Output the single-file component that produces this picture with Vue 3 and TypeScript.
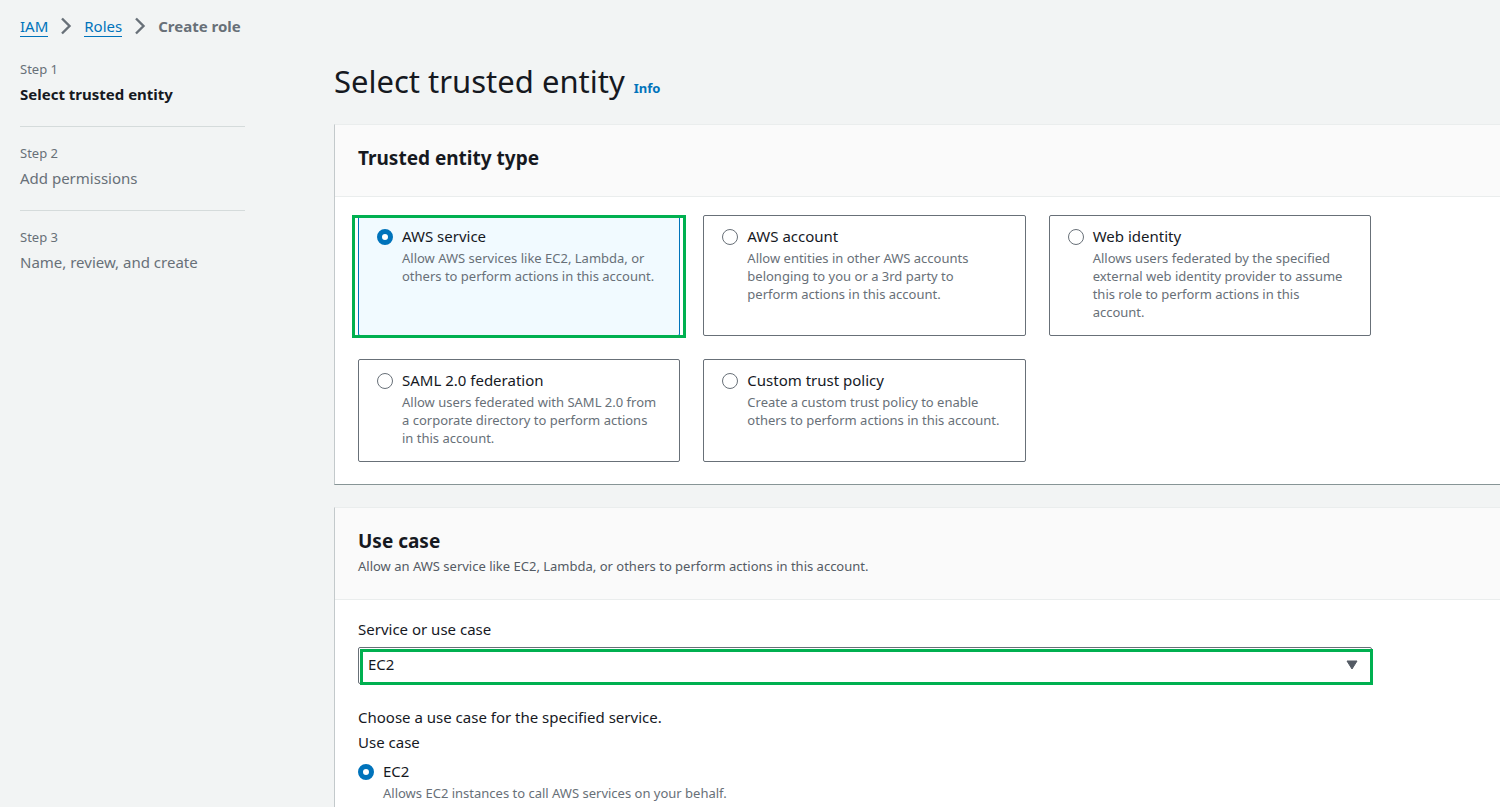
<script setup lang="ts">
import { ref } from 'vue'

interface Step {
  label: string
  title: string
}

interface EntityType {
  id: string
  title: string
  description: string
}

const steps: Step[] = [
  { label: 'Step 1', title: 'Select trusted entity' },
  { label: 'Step 2', title: 'Add permissions' },
  { label: 'Step 3', title: 'Name, review, and create' },
]
const currentStep = 0

const entityTypes: EntityType[] = [
  {
    id: 'service',
    title: 'AWS service',
    description: 'Allow AWS services like EC2, Lambda, or\nothers to perform actions in this account.',
  },
  {
    id: 'account',
    title: 'AWS account',
    description: 'Allow entities in other AWS accounts\nbelonging to you or a 3rd party to\nperform actions in this account.',
  },
  {
    id: 'web',
    title: 'Web identity',
    description:
      'Allows users federated by the specified\nexternal web identity provider to assume\nthis role to perform actions in this\naccount.',
  },
  {
    id: 'saml',
    title: 'SAML 2.0 federation',
    description: 'Allow users federated with SAML 2.0 from\na corporate directory to perform actions\nin this account.',
  },
  {
    id: 'custom',
    title: 'Custom trust policy',
    description: 'Create a custom trust policy to enable\nothers to perform actions in this account.',
  },
]

const entity = ref('service')
const service = ref('EC2')
const useCase = ref('ec2')
</script>

<template>
  <div class="page">
    <nav class="crumbs" aria-label="Breadcrumbs">
      <a href="#iam">IAM</a>
      <svg class="chevron" viewBox="0 0 12 18" aria-hidden="true"><path d="M2 1.5 9.5 9 2 16.5" /></svg>
      <a href="#roles">Roles</a>
      <svg class="chevron" viewBox="0 0 12 18" aria-hidden="true"><path d="M2 1.5 9.5 9 2 16.5" /></svg>
      <span class="here">Create role</span>
    </nav>

    <div class="columns">
      <ol class="steps">
        <li v-for="(step, i) in steps" :key="step.label" class="step" :class="{ current: i === currentStep }">
          <span class="step-label">{{ step.label }}</span>
          <span class="step-title">{{ step.title }}</span>
        </li>
      </ol>

      <main class="main">
        <div class="heading">
          <h1>Select trusted entity</h1>
          <a class="info" href="#info">Info</a>
        </div>

        <section class="panel">
          <header class="panel-head">
            <h2>Trusted entity type</h2>
          </header>
          <div class="tiles">
            <label v-for="t in entityTypes" :key="t.id" class="tile" :class="{ selected: entity === t.id }">
              <input v-model="entity" class="radio" type="radio" name="entity" :value="t.id" />
              <span class="option">
                <span class="option-title">{{ t.title }}</span>
                <span class="option-text">{{ t.description }}</span>
              </span>
            </label>
          </div>
        </section>

        <section class="panel last">
          <header class="panel-head">
            <h2>Use case</h2>
            <p class="sub">Allow an AWS service like EC2, Lambda, or others to perform actions in this account.</p>
          </header>
          <div class="form">
            <label class="field-label" for="service">Service or use case</label>
            <div class="select-wrap">
              <select id="service" v-model="service">
                <option>EC2</option>
                <option>Lambda</option>
              </select>
              <svg class="caret" viewBox="0 0 12 10" aria-hidden="true"><path d="M1 1h10L6 9z" /></svg>
            </div>
            <p class="choose">Choose a use case for the specified service.</p>
            <p class="case-label">Use case</p>
            <label class="case">
              <input v-model="useCase" class="radio" type="radio" name="usecase" value="ec2" />
              <span class="option">
                <span class="option-title">EC2</span>
                <span class="option-text">Allows EC2 instances to call AWS services on your behalf.</span>
              </span>
            </label>
          </div>
        </section>
      </main>
    </div>
  </div>
</template>

<style>
body {
  margin: 0;
  background: #f2f4f4;
}
</style>

<style scoped>
* {
  box-sizing: border-box;
}
.page {
  display: flex;
  flex-direction: column;
  min-height: 100vh;
  padding: 15px 0 0 20px;
  background: #f2f4f4;
  color: #16191f;
  font-family: 'Noto Sans', 'Open Sans', sans-serif;
  font-size: 15px;
  line-height: 22px;
}
h1,
h2,
p,
ol {
  margin: 0;
  padding: 0;
}
.crumbs {
  display: flex;
  align-items: center;
  height: 22px;
}
.crumbs a {
  height: 21px;
  border-bottom: 1px solid #0073bb;
  color: #0073bb;
  line-height: 20px;
  text-decoration: none;
}
.chevron {
  width: 12px;
  height: 18px;
  margin: 0 12px;
  fill: none;
  stroke: #687078;
  stroke-width: 2.4;
}
.here {
  color: #687078;
  font-weight: 700;
  line-height: 20px;
}
.columns {
  display: flex;
  flex: 1;
  gap: 89px;
}
.steps {
  flex: 0 0 225px;
  padding-top: 6px;
  list-style: none;
}
.step {
  display: flex;
  flex-direction: column;
  gap: 5px;
  padding: 17px 0 21px;
  border-bottom: 1px solid #d5dbdb;
  color: #687078;
}
.step:last-child {
  border-bottom: 0;
}
.step-label {
  font-size: 13px;
  line-height: 18px;
}
.current .step-title {
  color: #16191f;
  font-weight: 700;
}
.main {
  display: flex;
  flex: 1;
  flex-direction: column;
  min-width: 0;
}
.heading {
  display: flex;
  align-items: baseline;
  gap: 9px;
  height: 87px;
  padding-top: 24px;
}
h1 {
  font-size: 31px;
  font-weight: 400;
  line-height: 40px;
}
.info {
  color: #0073bb;
  font-size: 13px;
  font-weight: 700;
  text-decoration: none;
}
.panel {
  margin-bottom: 22px;
  border-top: 1px solid #eaeded;
  border-left: 1px solid #c3c9cb;
  border-bottom: 1px solid #879596;
  background: #fff;
}
.panel.last {
  flex: 1;
  margin-bottom: 0;
  border-bottom: 0;
}
.panel-head {
  padding: 20px 23px 25px;
  border-bottom: 1px solid #eaeded;
  background: #fafafa;
}
h2 {
  font-size: 19px;
  font-weight: 700;
  line-height: 26px;
}
.sub {
  margin-top: 4px;
  color: #545b64;
  font-size: 13px;
  line-height: 16px;
}
.tiles {
  display: grid;
  grid-template-columns: repeat(3, 1fr);
  gap: 23px;
  max-width: 1059px;
  padding: 18px 23px 22px;
}
.tile {
  position: relative;
  display: flex;
  gap: 9px;
  padding: 9px 0 14px 18px;
  border: 1px solid #687078;
  border-radius: 2px;
}
.tile.selected {
  border-color: #0073bb;
  background: #f1faff;
}
.tile.selected::after {
  position: absolute;
  inset: -1px -7px -3px;
  border: 3px solid #00b050;
  content: '';
}
.radio {
  flex: none;
  width: 16px;
  height: 16px;
  margin: 4px 0 0;
  border: 1px solid #687078;
  border-radius: 50%;
  appearance: none;
  background: #fff;
}
.radio:checked {
  border: 5px solid #0073bb;
}
.option {
  display: flex;
  flex-direction: column;
  gap: 2px;
}
.option-text {
  color: #687078;
  font-size: 13px;
  line-height: 18px;
  white-space: pre-line;
}
.form {
  display: flex;
  flex-direction: column;
  max-width: 1060px;
  padding: 18px 23px 0;
}
.select-wrap {
  position: relative;
  margin: 7px 0 22px;
}
.select-wrap::after {
  position: absolute;
  inset: 2px -1px -1px 2px;
  border: 3px solid #00b050;
  content: '';
  pointer-events: none;
}
select {
  display: block;
  width: 100%;
  height: 37px;
  padding: 0 10px 4px 9px;
  border: 1px solid #687078;
  border-radius: 2px;
  appearance: none;
  background: #fff;
  color: #16191f;
  font: inherit;
}
.caret {
  position: absolute;
  top: 13px;
  right: 14px;
  width: 12px;
  height: 10px;
  fill: #545b64;
  stroke: #545b64;
  stroke-linejoin: round;
  pointer-events: none;
}
.case-label {
  margin-top: 3px;
}
.case {
  display: flex;
  gap: 9px;
  margin-top: 7px;
}
</style>
